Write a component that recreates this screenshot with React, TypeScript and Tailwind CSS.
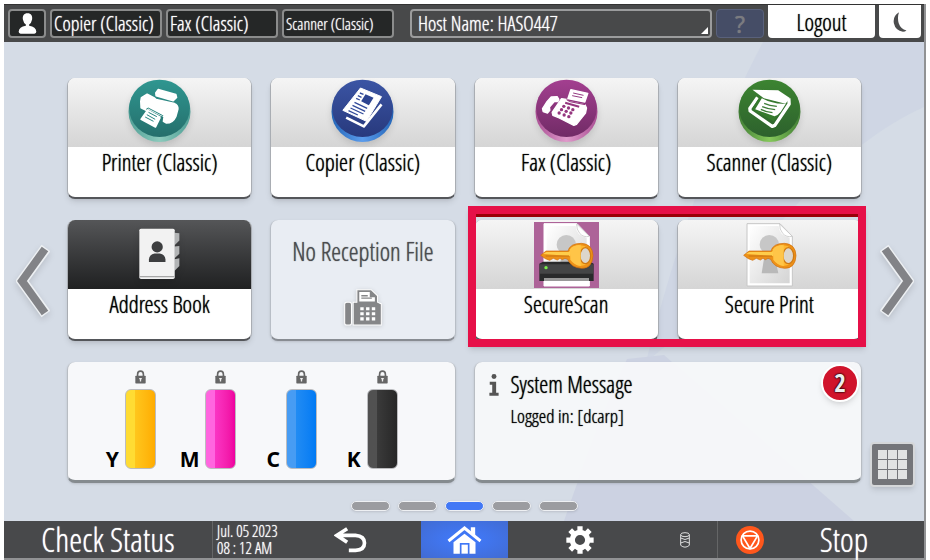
import React from 'react'

const tileClass = 'flex h-[121px] w-full flex-col overflow-hidden rounded-lg border-x border-b-2 border-x-[#a9adb3] border-b-[#54565a] bg-white shadow-md'

const Disc = ({ id, top, bottom, edge, rim, children }: { id: string, top: string, bottom: string, edge: string, rim: string, children: React.ReactNode }) => (
    <svg viewBox="0 0 188 192" className="mt-px h-16 w-[63px] drop-shadow-md" aria-hidden="true">
        <defs>
            <linearGradient id={id} x1="0" y1="0" x2="0" y2="1">
                <stop offset="0" stopColor={top} />
                <stop offset="1" stopColor={bottom} />
            </linearGradient>
            <linearGradient id={`${id}-rim`}>
                <stop offset="0" stopColor={edge} />
                <stop offset="0.5" stopColor={rim} />
                <stop offset="1" stopColor={edge} />
            </linearGradient>
        </defs>
        <ellipse cx="94" cy="98" rx="93" ry="91" fill={`url(#${id}-rim)`} />
        <ellipse cx="94" cy="88" rx="91" ry="86" fill={`url(#${id})`} />
        {children}
    </svg>
)

const PrinterIcon = () => (
    <Disc id="printer" top="#2f9690" bottom="#256f6c" edge="#4f9f96" rim="#8ccabc">
        <g fill="#fff" stroke="#fff" strokeWidth="5" strokeLinejoin="round">
            <path d="M90 32L143 47L145 55L135 65L84 50L83 42Z" />
            <path d="M38 67L40 56L57 46L77 56L84 62L139 74Q150 79 149 90L143 112Q134 132 115 132L106 127L108 113L100 109L58 88L54 94L39 86Z" />
            <path d="M58 94L96 115L82 144L39 121L48 108Z" />
        </g>
        <g stroke="#298580" strokeWidth="3">
            <path d="M61 100L86 113M56 107L81 121M51 114L76 127" />
            <path d="M54 91L60 87L104 110L98 116" fill="none" />
        </g>
    </Disc>
)

const CopierIcon = () => (
    <Disc id="copier" top="#3b55a4" bottom="#28397d" edge="#2466b8" rim="#5b9cec">
        <path d="M88 27L151 53L106 127L35 94Z" fill="#fff" stroke="#fff" strokeWidth="3" strokeLinejoin="round" />
        <path d="M45 116L98 142L151 76" fill="none" stroke="#fff" strokeWidth="8" strokeLinejoin="round" />
        <path d="M103 46L127 56L113 79L90 67Z" fill="#2d4491" />
        <path d="M86 42L97 46M80 50L91 55M75 58L86 63M70 70L108 88M64 79L102 97M58 87L97 105M52 95L80 108" stroke="#344c9b" strokeWidth="4" />
    </Disc>
)

const FaxIcon = () => (
    <Disc id="fax" top="#a33f90" bottom="#712b66" edge="#aa4f94" rim="#df9aca">
        <g fill="#fff" stroke="#fff" strokeWidth="4" strokeLinejoin="round">
            <path d="M48 54L66 53L71 61L68 68L58 67L43 84L44 94L37 102L24 98L22 89L36 67Z" />
            <path d="M107 32L158 43L149 69L98 59Z" />
            <path d="M79 59L94 61L98 67L150 78L154 87L151 102L124 136L116 139L72 117L53 109L51 100Z" />
        </g>
        <path d="M114 42L145 49M111 50L141 56" stroke="#953b83" strokeWidth="3" />
        <path d="M94 62L104 68L150 77" fill="none" stroke="#95367f" strokeWidth="3" />
        <path d="M90 71L132 83" fill="none" stroke="#95367f" strokeWidth="6" />
        <g fill="#95367f">
            <circle cx="86" cy="82" r="5" /><circle cx="100" cy="87" r="5" /><circle cx="113" cy="92" r="5" />
            <circle cx="79" cy="92" r="5" /><circle cx="93" cy="97" r="5" /><circle cx="107" cy="102" r="5" />
            <circle cx="72" cy="102" r="5" /><circle cx="87" cy="108" r="5" /><circle cx="101" cy="113" r="5" />
        </g>
    </Disc>
)

const ScannerIcon = () => (
    <Disc id="scanner" top="#3c8431" bottom="#2d612d" edge="#427f36" rim="#86c85b">
        <path d="M43 32L120 34L155 57L142 74L77 58Z" fill="#fff" />
        <path d="M58 55L35 88L36 96L102 142L110 139L153 75L152 58" fill="none" stroke="#fff" strokeWidth="10" strokeLinejoin="round" />
        <path d="M62 57L114 69L143 77L106 127L41 91Z" fill="#367a2e" />
        <path d="M71 58Q107 77 143 74L128 98Q119 109 109 112L51 91Z" fill="#fff" />
        <path d="M78 73Q94 80 116 82M72 83Q91 91 111 92M68 91Q83 99 103 101" fill="none" stroke="#3e7d38" strokeWidth="4" />
    </Disc>
)

const AddressIcon = () => (
    <svg viewBox="0 0 130 160" className="mt-2 ml-0.5 h-[53px] w-[43px] drop-shadow-md" aria-hidden="true">
        <path d="M107 14L122 16V38L107 53ZM107 56L122 54V78L107 92ZM107 94L122 91V115L107 130Z" fill="#b2b4b5" />
        <rect x="1" y="2" width="107" height="152" rx="5" fill="#f2f2f2" />
        <path d="M2 147H107" stroke="#a7a7a7" strokeWidth="4" />
        <circle cx="55" cy="57" r="17" fill="#3d3e40" />
        <path d="M30 103V95Q31 80 47 77H63Q79 80 80 95V103Z" fill="#3d3e40" />
    </svg>
)

const Key = () => (
    <g>
        <path d="M20 100L36 87H102Q108 64 142 64Q176 66 177 101Q175 139 143 139Q111 137 101 112L93 109L85 113L78 109L70 114L58 109L47 115L34 110Z" fill="#ed9118" stroke="#cf6d0b" strokeWidth="2" />
        <path d="M27 96L37 90H105Q110 70 141 68Q110 82 109 102Z" fill="#ffcd4a" />
        <ellipse cx="140" cy="101" rx="30" ry="31" fill="#ffb72f" />
        <ellipse cx="154" cy="101" rx="16" ry="24" fill="#dcd6cc" stroke="#d07a14" strokeWidth="4" />
        <path d="M108 82Q116 69 140 70V132Q119 128 109 113Z" fill="#ffc548" />
        <path d="M35 102H105" stroke="#c87410" strokeWidth="3" />
    </g>
)

const SecureIcon = ({ scan }: { scan?: boolean }) => (
    <svg viewBox="0 0 195 198" className="mt-0.5 h-[66px] w-[65px] shrink-0" aria-hidden="true">
        <defs>
            <linearGradient id="sheet" x1="0" y1="0" x2="1" y2="1">
                <stop stopColor="#fff" />
                <stop offset="1" stopColor="#d4d4d4" />
            </linearGradient>
        </defs>
        {scan && <rect width="195" height="198" fill="#ad6398" />}
        <path d="M30 5H129L166 43V192H30Z" fill="#fff" stroke={scan ? '#fff' : '#c6c6c6'} strokeWidth="3" />
        <path d="M38 12H125Q126 40 158 47V184H38Z" fill="url(#sheet)" />
        <circle cx="97" cy="68" r="29" fill="#c7c7c7" />
        <path d="M84 91H111L124 154H74Z" fill="#b9b9b9" />
        <path d="M128 6L166 43Q148 47 137 34Q127 22 128 6Z" fill="#fff" stroke="#bdbdbd" strokeWidth="2" />
        {scan && (
            <g>
                <path d="M16 125L27 119H168L179 125V177H16Z" fill="#292a2b" />
                <path d="M18 127H177V155H18Z" fill="#444546" />
                <path d="M30 168H165V192H30Z" fill="#fff" />
                <path d="M30 168H165V177H30Z" fill="#999" />
                <circle cx="36" cy="137" r="5" fill="#7bef4d" />
            </g>
        )}
        <Key />
    </svg>
)

const ReceptionIcon = () => (
    <svg viewBox="0 0 112 112" className="mt-[22px] h-[38px] w-[38px] drop-shadow-sm" aria-hidden="true">
        <g fill="#858688" stroke="#fff" strokeWidth="3">
            <rect x="2" y="39" width="20" height="67" rx="6" />
            <path d="M38 39V2H80L99 20V39L110 44V106H27V39Z" />
        </g>
        <path d="M45 9H76V24H91V37H45Z" fill="#fff" />
        <path d="M51 20H70M51 27H82" stroke="#858688" strokeWidth="4" />
        <path d="M48 58H92M48 73H92M48 88H92" stroke="#fff" strokeWidth="9" strokeDasharray="10 7" />
    </svg>
)

const UserIcon = () => (
    <svg viewBox="0 0 58 64" className="h-[21px] w-[19px]" fill="#fff" aria-hidden="true">
        <path d="M29 1C18 1 13 9 15 20Q17 31 24 35V39Q3 42 2 57Q2 62 8 63H50Q56 62 56 57Q55 42 34 39V35Q41 31 43 20C45 9 40 1 29 1Z" />
    </svg>
)

const Arrow = ({ right }: { right?: boolean }) => (
    <svg viewBox="0 0 34 74" className="h-[74px] w-[34px] drop-shadow-md" fill="none" strokeLinejoin="miter" aria-hidden="true">
        <path d={right ? 'M4 4L28 37L4 70' : 'M30 4L6 37L30 70'} stroke="#edf0f3" strokeWidth="11" />
        <path d={right ? 'M5 5L28 37L5 69' : 'M29 5L6 37L29 69'} stroke="#828387" strokeWidth="8" />
    </svg>
)

const AppTile = ({ name, icon, dark }: { name: string, icon: React.ReactNode, dark?: boolean }) => (
    <button className={tileClass}>
        <span className={`flex h-[69px] w-full shrink-0 justify-center bg-linear-to-b ${dark ? 'from-[#555658] to-[#202122]' : 'from-[#f5f5f5] to-[#d5d5d5]'}`}>
            {icon}
        </span>
        <span className="w-full text-center text-[23px] leading-[30px] text-black">{name}</span>
    </button>
)

const toners = [
    { name: 'Y', color: 'from-[#ffdc33] from-30% via-[#ffc71c] via-30% to-[#ffac00]' },
    { name: 'M', color: 'from-[#ff66df] from-30% via-[#fb35c5] via-30% to-[#ef009f]' },
    { name: 'C', color: 'from-[#479cf3] from-30% via-[#218cf3] via-30% to-[#007af4]' },
    { name: 'K', color: 'from-[#515151] from-30% via-[#3b3b3b] via-30% to-[#272727]' },
]

const Toner = () => (
    <section aria-label="Toner" className="col-span-2 grid h-[121px] grid-cols-4 rounded-lg border-x border-b-3 border-x-[#b8bdc3] border-b-[#858b8f] bg-[#f7f8fa] px-8 pt-2 shadow-sm">
        {toners.map((t) => (
            <div key={t.name} className="flex flex-col items-center">
                <svg viewBox="0 0 34 42" className="h-[14px] w-[11px]" aria-hidden="true">
                    <path d="M8 20V13Q8 3 17 3T26 13V20" fill="none" stroke="#666" strokeWidth="5" />
                    <rect x="1" y="17" width="32" height="24" rx="2" fill="#666" />
                    <path d="M17 24V35M13 26H21" stroke="#eee" strokeWidth="4" />
                </svg>
                <div className="mt-[5px] flex items-end">
                    <span className="-ml-7 w-7 pr-1.5 text-right font-['Noto_Sans'] text-[21px] leading-5 font-bold text-black [text-shadow:none]">{t.name}</span>
                    <span className={`h-20 w-[31px] rounded-md border border-[#bbbcbf] bg-linear-to-r ${t.color}`}></span>
                </div>
            </div>
        ))}
    </section>
)

const Message = () => (
    <section className="relative col-span-2 h-[121px] rounded-lg border-x border-b-3 border-x-[#b8bdc3] border-b-[#858b8f] bg-[#f7f8fa]/95 px-3.5 pt-1.5 shadow-sm">
        <div className="flex gap-3">
            <svg viewBox="0 0 28 62" className="mt-1.5 h-[22px] w-[10px]" fill="#555" aria-hidden="true">
                <circle cx="14" cy="7" r="7" />
                <path d="M2 22H20V53H27V61H1V53H9V30H2Z" />
            </svg>
            <div>
                <h2 className="text-[23px] leading-8 text-black">System Message</h2>
                <p className="text-[19px] leading-8 text-black">Logged in: [dcarp]</p>
            </div>
        </div>
        <span className="absolute top-0.5 right-0.5 flex h-[38px] w-[38px] items-center justify-center rounded-full border-2 border-white bg-[#d0142c] font-['Open_Sans_Condensed'] text-[25px] font-bold text-[#eee] shadow-md [text-shadow:0_0_2px_#000,0_0_2px_#000]">2</span>
    </section>
)

const Header = () => (
    <header className="flex h-[38px] gap-1 border-t border-[#333] bg-[#48494a] pr-[3px] pl-1 text-white">
        <div className="flex w-[386px] gap-1 py-1">
            <button aria-label="User" className="flex w-[38px] items-center justify-center rounded border-2 border-[#8b8c8c] bg-[#252727]"><UserIcon /></button>
            <button className="min-w-0 flex-1 rounded border-2 border-[#8b8c8c] bg-[#252727] pl-0.5 text-left text-[20px] leading-6 whitespace-nowrap">Copier (Classic)</button>
            <button className="min-w-0 flex-1 rounded border-2 border-[#8b8c8c] bg-[#252727] pl-0.5 text-left text-[20px] leading-6 whitespace-nowrap">Fax (Classic)</button>
            <button className="min-w-0 flex-1 rounded border-2 border-[#8b8c8c] bg-[#252727] pl-0.5 text-left text-[16px] leading-6 whitespace-nowrap">Scanner (Classic)</button>
        </div>
        <div className="flex min-w-0 flex-1 gap-1 py-1 pl-3">
            <button className="relative flex-1 rounded border-2 border-[#9b9c9d] pl-1.5 text-left text-[20px] leading-6">
                Host Name: HASO447
                <svg viewBox="0 0 8 8" className="absolute right-0.5 bottom-0.5 size-[7px]" fill="#fff" aria-hidden="true"><path d="M8 0V8H0Z" /></svg>
            </button>
            <button className="w-12 rounded border border-[#59617b] bg-[#454d66] font-['Noto_Sans'] text-[23px] leading-6 text-[#7b7c80]">?</button>
        </div>
        <button className="mb-1 w-[107px] rounded-b bg-white text-[23px] text-black">Logout</button>
        <button aria-label="Sleep" className="mb-1 flex w-[42px] items-center justify-center rounded-b bg-white">
            <svg viewBox="0 0 42 62" className="h-5 w-[14px]" aria-hidden="true"><path d="M18 1Q-2 13 2 35Q7 58 30 61Q37 61 41 57Q23 53 17 35Q12 16 18 1Z" fill="#4c4d4e" /></svg>
        </button>
    </header>
)

const Footer = () => (
    <footer className="grid h-[37px] grid-cols-[208fr_68fr_141fr_87fr_144fr_65fr_207fr] bg-[#48494b] text-white">
        <button className="text-[33px] leading-9">Check Status</button>
        <div className="min-w-0 border-l border-[#656667] pt-0.5 pl-1 text-[16px] leading-[17px] whitespace-nowrap">
            <p>Jul. 05 2023</p>
            <p>08 : 12 AM</p>
        </div>
        <button aria-label="Back" className="flex items-center justify-center">
            <svg viewBox="0 0 98 78" className="h-[26px] w-[33px]" fill="none" stroke="#fff" strokeWidth="11" aria-hidden="true">
                <path d="M39 5L8 25L39 46M8 25H64Q91 27 91 48T64 70H44" />
            </svg>
        </button>
        <button aria-label="Home" className="flex items-center justify-center bg-radial from-[#407bff] to-[#416bd2]">
            <svg viewBox="0 0 104 84" className="h-7 w-[35px]" aria-hidden="true">
                <path d="M4 45L52 6L100 45" fill="none" stroke="#fff" strokeWidth="9" />
                <path d="M71 4H84V31L71 20Z" fill="#fff" />
                <path d="M19 49L52 23L85 49V83H67V51H38V83H19Z" fill="#fff" />
                <path d="M43 56H62V83H43Z" fill="#fff" />
            </svg>
        </button>
        <button aria-label="Settings" className="flex items-center justify-center">
            <svg viewBox="-40 -40 80 80" className="size-7" fill="none" stroke="#fff" aria-hidden="true">
                <circle r="22" strokeWidth="15" />
                <g strokeWidth="15"><path d="M0 -39V-26M0 39V26M-39 0H-26M39 0H26M-28 -28L-19 -19M28 28L19 19M-28 28L-19 19M28 -28L19 -19" /></g>
            </svg>
        </button>
        <button aria-label="Storage" className="flex items-center justify-center">
            <svg viewBox="0 0 30 48" className="h-4 w-2.5" fill="none" stroke="#ddd" strokeWidth="3" aria-hidden="true">
                <ellipse cx="15" cy="8" rx="13" ry="6" />
                <path d="M2 8V40Q15 51 28 40V8M2 18Q15 27 28 18M2 33Q15 24 28 33" />
            </svg>
        </button>
        <button className="flex min-w-0 items-center border-l border-[#656667] pl-[18px]">
            <svg viewBox="0 0 82 82" className="size-7 shrink-0" fill="none" stroke="#fff" aria-hidden="true">
                <circle cx="41" cy="41" r="41" fill="#ff571c" stroke="none" />
                <circle cx="41" cy="41" r="26" strokeWidth="5" />
                <path d="M19 29H63L41 66Z" strokeWidth="5" strokeLinejoin="round" />
            </svg>
            <span className="flex-1 text-center text-[33px] leading-9">Stop</span>
        </button>
    </footer>
)

const App = () => {
    return (
        <div className="bg-white pt-1 pr-1 pl-1 font-['Open_Sans_Condensed_Light','Open_Sans_Condensed','Noto_Sans_CJK_JP',sans-serif] [text-shadow:0_0_1px_currentColor] [&_button]:[text-shadow:0_0_1px_currentColor]">
            <div className="border-r-2 border-b-2 border-[#919294]">
                <Header />
                <main className="relative isolate bg-[#d3dae5] pt-9 pb-2.5">
                    <svg viewBox="0 0 920 479" preserveAspectRatio="none" className="absolute inset-0 -z-10 h-full w-full" aria-hidden="true">
                        <path d="M0 0H920V479H0Z" fill="#d5dce6" />
                        <path d="M759 0H920V65Q820 110 710 265L642 320Q690 130 759 0Z" fill="#cdd4e3" opacity="0.8" />
                        <path d="M623 317Q590 390 560 479H850L660 313Z" fill="#ccd2e2" />
                    </svg>
                    <div className="flex">
                        <div className="grid w-[63px] grid-rows-3 gap-[21px]">
                            <button aria-label="Previous page" className="row-start-2 ml-3 self-center justify-self-start"><Arrow /></button>
                        </div>
                        <div className="grid flex-1 grid-cols-4 gap-x-[18px] gap-y-[21px]">
                            <AppTile name="Printer (Classic)" icon={<PrinterIcon />} />
                            <AppTile name="Copier (Classic)" icon={<CopierIcon />} />
                            <AppTile name="Fax (Classic)" icon={<FaxIcon />} />
                            <AppTile name="Scanner (Classic)" icon={<ScannerIcon />} />
                            <AppTile name="Address Book" dark icon={<AddressIcon />} />
                            <button className="flex h-[121px] flex-col items-center rounded-lg border-x border-b-2 border-x-[#b8bec6] border-b-[#888c92] bg-[#e9edf3] pt-[15px] shadow-sm">
                                <span className="text-[25px] leading-8 text-[#4b4c4f]">No Reception File</span>
                                <ReceptionIcon />
                            </button>
                            <div className="relative col-span-2 grid grid-cols-2 gap-[18px]">
                                <AppTile name="SecureScan" icon={<SecureIcon scan />} />
                                <AppTile name="Secure Print" icon={<SecureIcon />} />
                                {/* highlight frame */}
                                <div className="pointer-events-none absolute -top-3.5 -right-1 -bottom-1.5 -left-1.5 border-8 border-[#e61048] shadow-md">
                                    <div className="h-[3px] bg-[#990008]"></div>
                                </div>
                            </div>
                            <Toner />
                            <Message />
                        </div>
                        <div className="grid w-[62px] grid-rows-3 gap-[21px]">
                            <button aria-label="Next page" className="row-start-2 mr-2.5 self-center justify-self-end"><Arrow right /></button>
                            <button aria-label="All applications" className="row-start-3 -mb-1 ml-2 grid size-[45px] grid-cols-[9px_9px_9px] place-content-center gap-px self-end rounded border-2 border-[#d5d7d9] bg-[#747579] shadow-md">
                                {[1, 2, 3, 4, 5, 6, 7, 8, 9].map((n) => <span key={n} className="size-[9px] bg-[#e2e3e3]"></span>)}
                            </button>
                        </div>
                    </div>
                    <div className="mt-[18px] flex justify-center gap-2">
                        {[0, 1, 2, 3, 4].map((n) => (
                            <button key={n} aria-label={`Page ${n + 1}`} className={`h-2.5 w-[39px] rounded-full border border-[#eef0f3] shadow-sm ${n === 2 ? 'bg-[#4278f5]' : 'bg-[#9b9ca0]'}`}></button>
                        ))}
                    </div>
                </main>
                <Footer />
            </div>
        </div>
    )
}

export default App
